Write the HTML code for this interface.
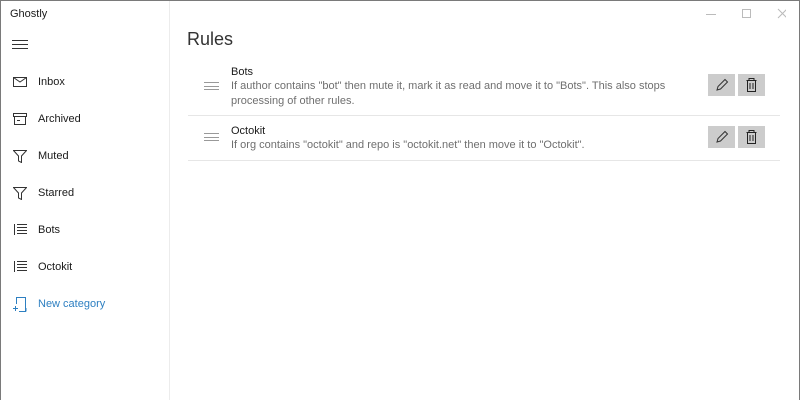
<!DOCTYPE html>
<html><head><style>
*{margin:0;padding:0;box-sizing:border-box}
body{width:800px;height:400px;overflow:hidden;background:#fff;font-family:"Liberation Sans",sans-serif;position:relative;color:#1a1a1a}
.frame{position:absolute;left:0;top:0;width:800px;height:400px;border:1px solid #7a7a7a;border-bottom:none}
.side{position:absolute;left:1px;top:1px;width:169px;height:399px;border-right:1px solid #ececec}
.t{position:absolute;font-size:11px}
.nav{position:absolute;left:37px;font-size:11px;color:#1a1a1a}
.ic{position:absolute;left:12px}
.row{position:absolute;left:188px;width:592px;border-bottom:1px solid #e6e6e6}
.title{position:absolute;left:43px;font-size:11px}
.desc{position:absolute;left:43px;font-size:11px;color:#6f6f6f;line-height:15px;width:440px}
.btn{position:absolute;width:27px;height:22px;background:#cccccc}
.grip{position:absolute;left:16px;width:15px;height:8px;border-top:1px solid #999;border-bottom:1px solid #999}
.grip:after{content:"";position:absolute;left:0;right:0;top:3px;border-top:1px solid #999}
</style></head><body>
<div class="frame"></div>
<div class="side">
<div class="t" style="left:9px;top:7px;font-size:11px">Ghostly</div>
<svg class="ic" style="left:11px;top:39px" width="16" height="10"><path d="M0 .5H16M0 4.5H16M0 8.5H16" stroke="#333"/></svg>
<svg class="ic" style="top:76px" width="14" height="10"><rect x=".5" y=".5" width="13" height="9" fill="none" stroke="#333"/><path d="M.5 .5L7 5L13.5 .5" fill="none" stroke="#333"/></svg>
<div class="nav" style="top:75px">Inbox</div>
<svg class="ic" style="top:112px" width="14" height="12"><path d="M.5 .5H13.5V3.5H.5ZM1.5 3.5V11.5H12.5V3.5M4 7.5H7" fill="none" stroke="#333"/></svg>
<div class="nav" style="top:112px">Archived</div>
<svg class="ic" style="top:149px" width="14" height="13"><path d="M.5 .5H13.5L8.5 6V12.5L5.5 11V6Z" fill="none" stroke="#333"/></svg>
<div class="nav" style="top:149px">Muted</div>
<svg class="ic" style="top:186px" width="14" height="13"><path d="M.5 .5H13.5L8.5 6V12.5L5.5 11V6Z" fill="none" stroke="#333"/></svg>
<div class="nav" style="top:186px">Starred</div>
<svg class="ic" style="left:13px;top:223px" width="13" height="11"><path d="M.5 0V11M3 .5H13M3 3.5H13M3 6.5H13M3 9.5H13" stroke="#333"/></svg>
<div class="nav" style="top:223px">Bots</div>
<svg class="ic" style="left:13px;top:260px" width="13" height="11"><path d="M.5 0V11M3 .5H13M3 3.5H13M3 6.5H13M3 9.5H13" stroke="#333"/></svg>
<div class="nav" style="top:260px">Octokit</div>
<svg class="ic" style="top:296px" width="15" height="15"><path d="M3.5 7V.5H12.5V14.5H6M13 11V14.5M0 11.5H5M2.5 9V14" fill="none" stroke="#2d7fc1"/></svg>
<div class="nav" style="top:297px;color:#2d7fc1">New category</div>
</div>
<svg style="position:absolute;left:706px;top:8px" width="80" height="12"><path d="M0 6.5H10" stroke="#bbb"/><rect x="36.5" y="1.5" width="8" height="8" fill="none" stroke="#bbb"/><path d="M72 1L81 10M81 1L72 10" stroke="#bbb"/></svg>
<div class="t" style="left:187px;top:29px;font-size:18px;color:#333">Rules</div>
<div class="row" style="top:63px;height:53px">
<div class="grip" style="top:19px"></div>
<div class="title" style="top:3px">Bots</div>
<div class="desc" style="top:16px">If author contains "bot" then mute it, mark it as read and move it to "Bots". This also stops processing of other rules.</div>
<div class="btn" style="left:520px;top:11px"><svg width="27" height="22"><path d="M9 16L10 12.5L17 5.5L19.5 8L12.5 15Z" fill="none" stroke="#333"/></svg></div>
<div class="btn" style="left:550px;top:11px"><svg width="27" height="22"><path d="M8.5 6.5H18.5M11 6V4.5H16V6M9.5 6.5V17.5H17.5V6.5M12 9V15M15 9V15" fill="none" stroke="#222"/></svg></div>
</div>
<div class="row" style="top:116px;height:45px">
<div class="grip" style="top:17px"></div>
<div class="title" style="top:9px">Octokit</div>
<div class="desc" style="top:22px">If org contains "octokit" and repo is "octokit.net" then move it to "Octokit".</div>
<div class="btn" style="left:520px;top:10px"><svg width="27" height="22"><path d="M9 16L10 12.5L17 5.5L19.5 8L12.5 15Z" fill="none" stroke="#333"/></svg></div>
<div class="btn" style="left:550px;top:10px"><svg width="27" height="22"><path d="M8.5 6.5H18.5M11 6V4.5H16V6M9.5 6.5V17.5H17.5V6.5M12 9V15M15 9V15" fill="none" stroke="#222"/></svg></div>
</div>
</body></html>
